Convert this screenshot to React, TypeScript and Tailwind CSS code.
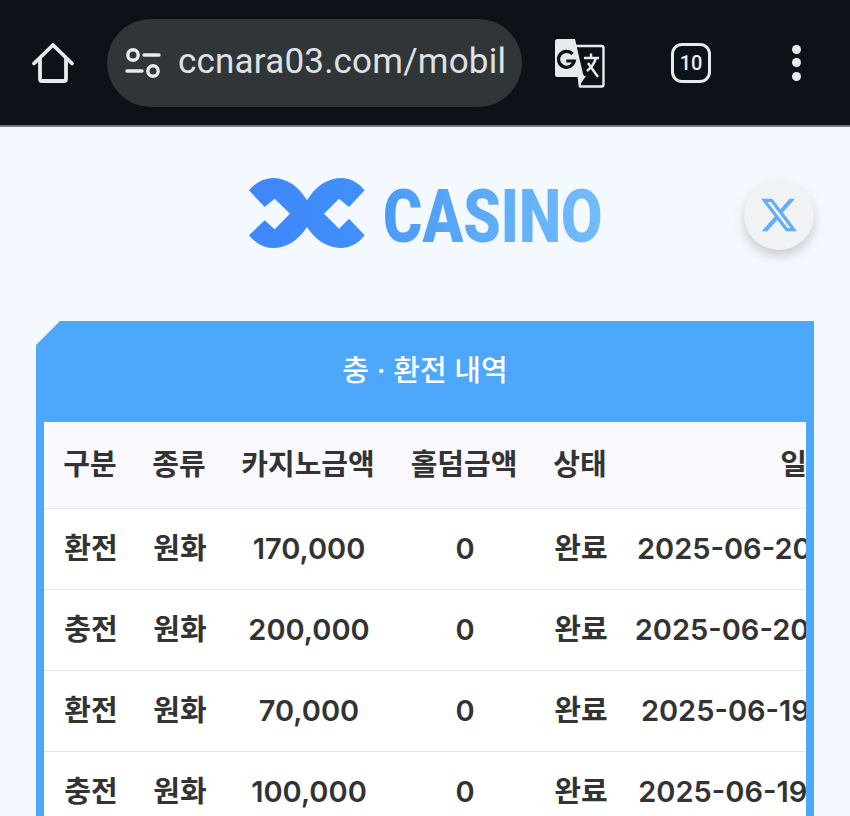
const rows = [
  { kind: '환전', amount: '170,000', date: '2025-06-20 18:42:10' },
  { kind: '충전', amount: '200,000', date: '2025-06-20 14:05:37' },
  { kind: '환전', amount: '70,000', date: '2025-06-19 21:16:52' },
  { kind: '충전', amount: '100,000', date: '2025-06-19 17:33:08' },
]

function HomeIcon() {
  return (
    <svg width="44" height="44" viewBox="0 0 44 44" fill="none" stroke="#e8eaed" strokeWidth="3.8" strokeLinejoin="round" strokeLinecap="round">
      <path d="M3 22.5 22 4l19 18.5" />
      <path d="M9 17.5V38a2 2 0 0 0 2 2h22a2 2 0 0 0 2-2V17.5" />
    </svg>
  )
}

function TuneIcon() {
  return (
    <svg width="36" height="30" viewBox="0 0 36 30" fill="none" stroke="#e8eaed" strokeWidth="3.4" strokeLinecap="round">
      <circle cx="8" cy="7" r="5.2" />
      <path d="M19 7h15" />
      <path d="M2 23h15" />
      <circle cx="28" cy="23" r="5.2" />
    </svg>
  )
}

function TranslateIcon() {
  return (
    <svg width="50" height="50" viewBox="0 0 50 50" fill="none">
      <path d="M20 8h26.500A2 2 0 0 1 48.500 10v36.500a2 2 0 0 1-2 2H25z" fill="#0d1219" stroke="#e8eaed" strokeWidth="2.400" strokeLinejoin="round" />
      <path d="M2.500 1H20l8 35 2 3H2.500A2.500 2.500 0 0 1 0 36.500V3.500A2.500 2.500 0 0 1 2.500 1z" fill="#e8eaed" />
      <path d="M23 38h8l-7 10z" fill="#e8eaed" />
      <path d="M17.500 16a8 8 0 1 0 1.800 7h-8" stroke="#0d1219" strokeWidth="3.200" />
      <path d="M29 20h15M36 15.500V20M41 20c-2 6-5 10-9 13M33 25l10 14" stroke="#e8eaed" strokeWidth="2.400" />
    </svg>
  )
}

function LogoMark() {
  return (
    <svg width="126" height="82" viewBox="0 0 378 246">
      <defs>
        <linearGradient id="mark" x1="0" x2="1">
          <stop offset="0" stopColor="#3f86fb" />
          <stop offset="1" stopColor="#3f90fc" />
        </linearGradient>
      </defs>
      <path
        d="M15 55Q45 20 85 18 148 18 189 85 230 18 295 18 335 20 362 55L315 105 285 80 240 125 285 170 315 140 362 190Q335 226 295 228 230 228 189 165 148 228 85 228 45 226 15 190L62 145 92 172 138 125 92 80 62 105Z"
        fill="url(#mark)"
      />
    </svg>
  )
}

function XLogo() {
  return (
    <svg width="40" height="40" viewBox="0 0 24 24" fill="#63aef8">
      <path d="M18.244 2.250h3.308l-7.227 8.260 8.502 11.240H16.170l-5.214-6.817L4.990 21.750H1.680l7.730-8.835L1.254 2.250H8.080l4.713 6.231zm-1.161 17.520h1.833L7.084 4.126H5.117z" />
    </svg>
  )
}

export default function App() {
  return (
    <div className="h-[816px] w-[850px] overflow-hidden bg-[#f4f8ff] font-['Inter','Noto_Sans_CJK_KR',sans-serif]">
      <header className="flex h-[127px] items-center border-b-2 border-[#6f767c] bg-[#0d1219]">
        <div className="flex w-[107px] justify-center pr-[1px]">
          <HomeIcon />
        </div>
        <div className="flex h-[88px] w-[415px] items-center rounded-full bg-[#303538] pl-[18px] pr-[17px]">
          <TuneIcon />
          <span className="ml-[17px] w-[327px] overflow-hidden whitespace-nowrap font-['Roboto',sans-serif] text-[35px] tracking-[0.2px] text-[#dfe2e5]">
            ccnara03.com/mobile/cash
          </span>
        </div>
        <div className="ml-[33px] w-[50px]">
          <TranslateIcon />
        </div>
        <div className="ml-[66px] flex size-[40px] items-center justify-center rounded-[11px] border-[3.5px] border-[#e8eaed] font-['Roboto',sans-serif] text-[20px] font-medium text-[#e8eaed]">
          10
        </div>
        <div className="ml-[81px] flex flex-col gap-[4.500px]">
          <span className="size-[9px] rounded-full bg-[#e8eaed]" />
          <span className="size-[9px] rounded-full bg-[#e8eaed]" />
          <span className="size-[9px] rounded-full bg-[#e8eaed]" />
        </div>
      </header>

      <div className="relative flex h-[194px] items-center">
        <div className="ml-[244px] flex items-center pb-[22px]">
          <LogoMark />
          <span className="ml-[13px] mt-[6px] w-[281px] origin-left scale-x-[0.8] bg-gradient-to-r from-[#4a9bf5] to-[#74bdfc] bg-clip-text font-['Roboto',sans-serif] text-[75px] font-black leading-none text-transparent">
            CASINO
          </span>
        </div>
        <button className="absolute left-[744px] top-[53px] flex size-[70px] items-center justify-center rounded-full bg-[#f1f2f4] shadow-[0_6px_12px_rgba(0,0,0,0.18)]">
          <XLogo />
        </button>
      </div>

      <section className="ml-[36px] w-[778px] bg-[#4da8fb] px-[8px] [clip-path:polygon(24px_0,100%_0,100%_100%,0_100%,0_24px)]">
        <h2 className="flex h-[101px] items-center justify-center pb-[2px] text-[29px] font-medium text-white">충 · 환전 내역</h2>
        <div className="h-[400px] overflow-hidden bg-white">
          <table className="w-[944px] table-fixed border-collapse text-center text-[29px] font-semibold text-[#333]">
            <colgroup>
              <col className="w-[92px]" />
              <col className="w-[86px]" />
              <col className="w-[172px]" />
              <col className="w-[140px]" />
              <col className="w-[92px]" />
              <col className="w-[362px]" />
            </colgroup>
            <thead>
              <tr className="h-[86px] border-b border-[#ececf0] bg-[#f9f9fd]">
                <th className="font-semibold">구분</th>
                <th className="font-semibold">종류</th>
                <th className="font-semibold">카지노금액</th>
                <th className="font-semibold">홀덤금액</th>
                <th className="font-semibold">상태</th>
                <th className="font-semibold">일시</th>
              </tr>
            </thead>
            <tbody>
              {rows.map((row) => (
                <tr key={row.date} className="h-[81px] border-b border-[#e6e6e6]">
                  <td className="pl-[2px]">{row.kind}</td>
                  <td className="pl-[2px]">원화</td>
                  <td className="pl-[2px]">{row.amount}</td>
                  <td className="pl-[2px]">0</td>
                  <td className="pl-[2px]">완료</td>
                  <td className="whitespace-nowrap [word-spacing:40px]">{row.date}</td>
                </tr>
              ))}
            </tbody>
          </table>
        </div>
      </section>
    </div>
  )
}
